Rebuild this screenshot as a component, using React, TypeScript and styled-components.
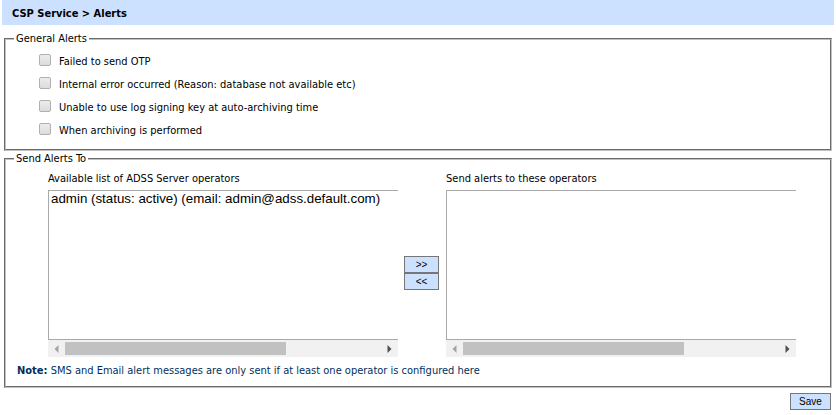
import React from "react";
import styled, { createGlobalStyle } from "styled-components";

const GlobalStyle = createGlobalStyle`
  *, *::before, *::after { box-sizing: border-box; }
  body {
    margin: 0;
    background: #fff;
    color: #000;
    font: 11px/15px Tahoma, "DejaVu Sans Condensed", "Noto Sans", sans-serif;
  }
`;

const Page = styled.form`
  display: flex;
  flex-direction: column;
  padding: 0 2px;
`;

const Header = styled.h1`
  margin: 0 0 6px;
  padding: 2px 10px 0;
  background: #cce0ff;
  font-size: 11px;
  font-weight: bold;
  line-height: 23px;
`;

const Group = styled.fieldset`
  min-width: 0;
  margin: 0 2px;
  padding: 3px 8px 7px;
  border: 2px groove #c0c0c0;
`;

const Legend = styled.legend`
  padding: 0 2px;
`;

const OptionList = styled.ul`
  margin: 0;
  padding: 1px 0 0 25px;
  list-style: none;
`;

const Option = styled.li`
  display: flex;
  align-items: center;
  height: 23px;
`;

const OptionLabel = styled.label`
  display: flex;
  align-items: center;
  gap: 8px;
`;

const Checkbox = styled.input`
  appearance: none;
  width: 12px;
  height: 12px;
  margin: 0 0 3px;
  border: 1px solid #b0b0b0;
  border-radius: 2px;
  background: linear-gradient(#ececec, #dcdcdc);

  &:checked {
    background: #5a5a5a;
  }
`;

const Transfer = styled.div`
  display: grid;
  grid-template-columns: minmax(0, 1fr) 48px minmax(0, 1fr);
  padding: 2px 26px 0 34px;
`;

const Column = styled.div`
  display: flex;
  flex-direction: column;
`;

const ColumnLabel = styled.label`
  margin-bottom: 4px;
`;

const ListBox = styled.select`
  appearance: none;
  width: 100%;
  height: 150px;
  padding: 0;
  border: 1px solid #a9a9a9;
  border-right: 0;
  border-radius: 0;
  background: #fff;
  font-family: "Liberation Sans", Arial, sans-serif;
  overflow: hidden;

  option {
    padding: 0 2px;
    color: #000;
  }
`;

const ScrollTrack = styled.div`
  display: grid;
  grid-template-columns: 17px minmax(0, 1fr) 17px;
  align-items: center;
  justify-items: center;
  height: 17px;
  background: #f1f1f1;
`;

const ScrollThumb = styled.div`
  justify-self: start;
  width: 70%;
  height: 13px;
  background: #c1c1c1;
`;

const Movers = styled.div`
  display: flex;
  flex-direction: column;
  align-items: center;
  padding: 85px 1px 0 0;
`;

const Button = styled.button<{ $width: number }>`
  width: ${(p) => p.$width}px;
  height: 17px;
  padding: 0;
  border: 1px solid #767676;
  border-radius: 0;
  background: #cce0ff;
  color: #000;
  font: 10px/15px "Liberation Sans", Arial, sans-serif;
`;

const Note = styled.p`
  margin: 6px 0 1px;
  padding-left: 3px;
  color: #003060;
`;

const Actions = styled.div`
  display: flex;
  justify-content: flex-end;
  padding: 5px 3px 0 0;
`;

const alerts = [
  "Failed to send OTP",
  "Internal error occurred (Reason: database not available etc)",
  "Unable to use log signing key at auto-archiving time",
  "When archiving is performed",
];

function ScrollBar() {
  return (
    <ScrollTrack aria-hidden="true">
      <svg width="5" height="8" viewBox="0 0 5 8">
        <path d="M4.5 0v8L0.5 4z" fill="#a3a3a3" />
      </svg>
      <ScrollThumb />
      <svg width="5" height="8" viewBox="0 0 5 8">
        <path d="M0.5 0v8L4.5 4z" fill="#505050" />
      </svg>
    </ScrollTrack>
  );
}

function OperatorList({ id, label, items }: { id: string; label: string; items: string[] }) {
  return (
    <Column>
      <ColumnLabel htmlFor={id}>{label}</ColumnLabel>
      <ListBox id={id} multiple size={8}>
        {items.map((item) => (
          <option key={item}>{item}</option>
        ))}
      </ListBox>
      <ScrollBar />
    </Column>
  );
}

export default function App() {
  return (
    <>
      <GlobalStyle />
      <Page onSubmit={(e) => e.preventDefault()}>
        <Header>CSP Service &gt; Alerts</Header>
        <Group>
          <Legend>General Alerts</Legend>
          <OptionList>
            {alerts.map((text) => (
              <Option key={text}>
                <OptionLabel>
                  <Checkbox type="checkbox" />
                  {text}
                </OptionLabel>
              </Option>
            ))}
          </OptionList>
        </Group>
        <Group>
          <Legend>Send Alerts To</Legend>
          <Transfer>
            <OperatorList
              id="available"
              label="Available list of ADSS Server operators"
              items={["admin (status: active) (email: admin@adss.default.com)"]}
            />
            <Movers>
              <Button type="button" $width={35}>&gt;&gt;</Button>
              <Button type="button" $width={35}>&lt;&lt;</Button>
            </Movers>
            <OperatorList id="selected" label="Send alerts to these operators" items={[]} />
          </Transfer>
          <Note>
            <strong>Note:</strong> SMS and Email alert messages are only sent if at least one operator is configured here
          </Note>
        </Group>
        <Actions>
          <Button type="submit" $width={41}>Save</Button>
        </Actions>
      </Page>
    </>
  );
}
